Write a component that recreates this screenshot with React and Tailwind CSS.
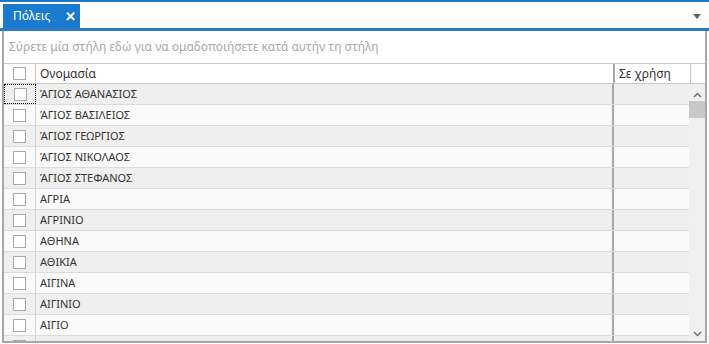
import React from "react";

const rows = [
  "ΆΓΙΟΣ ΑΘΑΝΑΣΙΟΣ",
  "ΆΓΙΟΣ ΒΑΣΙΛΕΙΟΣ",
  "ΆΓΙΟΣ ΓΕΩΡΓΙΟΣ",
  "ΆΓΙΟΣ ΝΙΚΟΛΑΟΣ",
  "ΆΓΙΟΣ ΣΤΕΦΑΝΟΣ",
  "ΑΓΡΙΑ",
  "ΑΓΡΙΝΙΟ",
  "ΑΘΗΝΑ",
  "ΑΘΙΚΙΑ",
  "ΑΙΓΙΝΑ",
  "ΑΙΓΙΝΙΟ",
  "ΑΙΓΙΟ",
  "",
];

function Box() {
  return <div className="w-[13px] h-[13px] border border-[#a9a9a9] bg-white" />;
}

export default function App() {
  return (
    <div
      className="w-[709px] h-[344px] bg-white overflow-hidden flex flex-col text-[12px] text-[#333]"
      style={{ fontFamily: '"Noto Sans", "Open Sans", sans-serif' }}
    >
      <div className="h-[2px] bg-[#1e74c4] shrink-0" />
      <div className="h-[26px] flex items-end pl-[3px] pr-[8px] shrink-0 bg-white">
        <div className="h-[24px] w-[77px] bg-[#1a7ad0] text-white flex items-center pl-[10px] gap-[15px]">
          <span className="text-[12px]">Πόλεις</span>
          <span className="text-[13px] font-bold leading-none">✕</span>
        </div>
        <div className="flex-1" />
        <div className="self-center mb-[-2px] w-0 h-0 border-l-[4px] border-r-[4px] border-t-[5px] border-l-transparent border-r-transparent border-t-[#606060]" />
      </div>
      <div className="h-[3px] bg-[#2b7ac4] shrink-0" />
      <div className="flex-1 flex flex-col ml-[2px] mr-[2px] border-l-2 border-r-2 border-b-2 border-[#a8a8a8] overflow-hidden">
        <div className="h-[33px] shrink-0 flex items-center pl-[5px] text-[#a9a9a9] border-b border-[#c8c8c8]">
          Σύρετε μία στήλη εδώ για να ομαδοποιήσετε κατά αυτήν τη στήλη
        </div>
        <div className="h-[20px] shrink-0 flex border-b border-[#c8c8c8]">
          <div className="w-[32px] shrink-0 flex items-center justify-center border-r border-[#c8c8c8]">
            <Box />
          </div>
          <div className="flex-1 flex items-center pl-[4px]">Ονομασία</div>
          <div className="w-[77px] shrink-0 flex items-center pl-[4px] border-l-2 border-[#a8a8a8]">Σε χρήση</div>
          <div className="w-[15px] shrink-0 border-l border-[#c8c8c8]" />
        </div>
        <div className="flex-1 flex overflow-hidden">
          <div className="flex-1 flex flex-col overflow-hidden">
            {rows.map((r, i) => (
              <div
                key={i}
                className={`h-[21px] shrink-0 flex border-b border-[#dcdcdc] ${i % 2 === 0 ? "bg-[#efefef]" : "bg-[#fafafa]"}`}
              >
                <div
                  className={`w-[32px] shrink-0 flex items-center justify-center border-r ${i === 0 ? "border border-dotted border-black" : "border-[#d4d4d4]"}`}
                >
                  <Box />
                </div>
                <div className="flex-1 flex items-center pl-[4px] text-[11px]">{r}</div>
                <div className="w-[77px] shrink-0 border-l-2 border-[#a8a8a8]" />
              </div>
            ))}
          </div>
          <div className="w-[16px] shrink-0 bg-[#f0f0f0] flex flex-col items-center relative">
            <svg width="9" height="6" viewBox="0 0 9 6" className="mt-[8px]">
              <path d="M1 5 L4.5 1.5 L8 5" stroke="#707070" strokeWidth="1.5" fill="none" />
            </svg>
            <div className="w-[16px] h-[17px] bg-[#c8c8c8] mt-[3px]" />
            <div className="flex-1" />
            <svg width="9" height="6" viewBox="0 0 9 6" className="mb-[4px]">
              <path d="M1 1 L4.5 4.5 L8 1" stroke="#707070" strokeWidth="1.5" fill="none" />
            </svg>
          </div>
        </div>
      </div>
      <div className="h-[1px] shrink-0" />
    </div>
  );
}
